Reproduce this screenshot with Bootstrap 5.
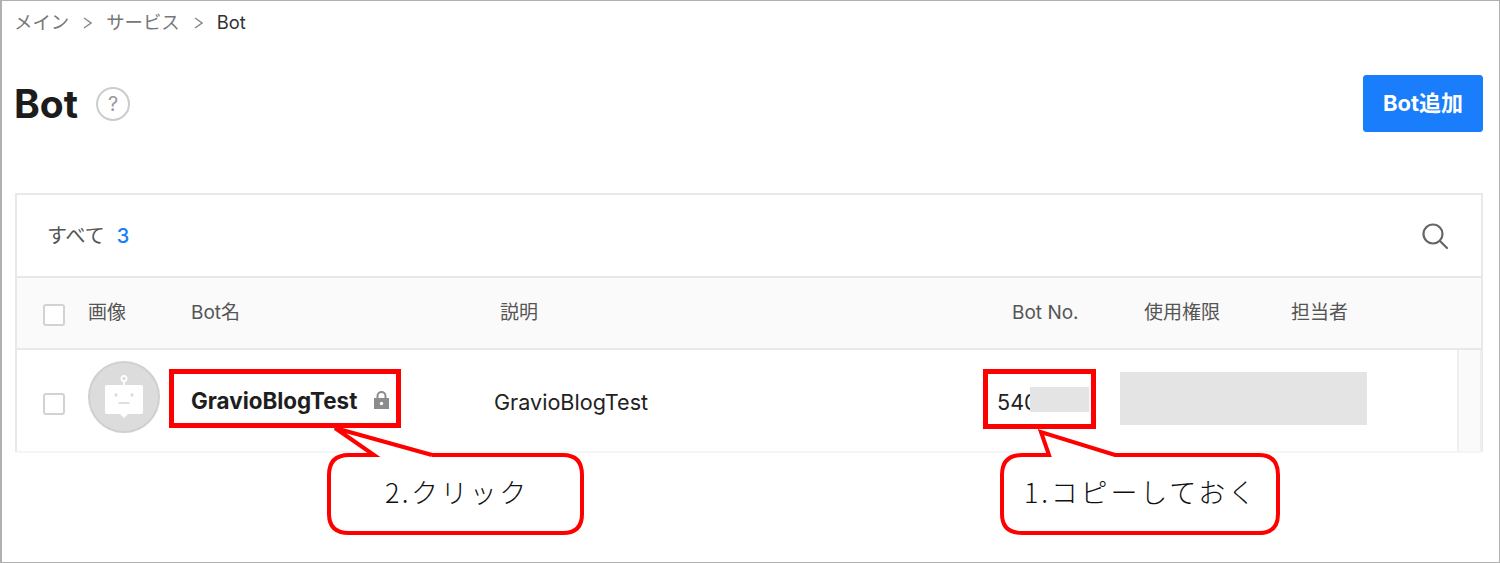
<!DOCTYPE html>
<html lang="ja">
<head>
    <meta charset="UTF-8">
    <title>Bot</title>
    <link href="https://cdn.jsdelivr.net/npm/bootstrap@5.3.2/dist/css/bootstrap.min.css" rel="stylesheet">
    <style>
        html, body { height: 563px; overflow: hidden; }
        body { font-family: Inter, "Noto Sans CJK JP", sans-serif; color: #222; }
        .shot { position: relative; height: 563px; border: 1px solid #b0b0b0; border-left-width: 2px; padding: 0 16px 0 12px; overflow: hidden; }
        .crumbs { --bs-breadcrumb-divider: url("data:image/svg+xml,%3Csvg xmlns='http://www.w3.org/2000/svg' width='9' height='24'%3E%3Cpath d='M1 8l7 5-7 5' fill='none' stroke='%23888' stroke-width='1.4'/%3E%3C/svg%3E"); --bs-breadcrumb-margin-bottom: 0; --bs-breadcrumb-item-padding-x: 14px; font-size: 18.4px; line-height: 24px; padding-top: 9px; color: #777; }
        .crumbs .breadcrumb-item.active { color: #333; }
        .top-bar { height: 87px; margin-top: 21px; }
        .page-title { font-size: 39px; font-weight: 700; line-height: 1; color: #1c1c1c; margin: 0; }
        .help-mark { width: 34px; height: 34px; margin-left: 18px; border: 2px solid #ccc; font-size: 20px; color: #999; line-height: 30px; }
        .add-btn { --bs-btn-bg: #1a7dfb; --bs-btn-border-color: #1a7dfb; --bs-btn-color: #fff; width: 120px; height: 57px; font-size: 22px; font-weight: 700; border-radius: 3px; padding: 0; }
        .bot-panel { margin: 46px 0 0 1px; border: 2px solid #e8e8e8; border-bottom: 0; height: 259px; }
        .panel-head { height: 83px; padding: 0 32px 0 30px; font-size: 20px; color: #555; border-bottom: 2px solid #e8e8e8; }
        .panel-head b { font-weight: 500; color: #1a7dfb; margin-left: 12px; }
        .bot-table { table-layout: fixed; width: 1464px; margin: 0; --bs-table-color: #222; }
        .bot-table th { height: 71px; background: #fafafa; border-bottom: 2px solid #e8e8e8; font-size: 19px; font-weight: 400; color: #555; padding: 0; vertical-align: middle; }
        .bot-table td { height: 103px; border-bottom: 2px solid #f5f5f5; padding: 0; vertical-align: middle; font-size: 21.6px; }
        .c-check { width: 71px; padding-left: 26px !important; }
        .c-image { width: 103px; }
        .c-name { width: 303px; }
        .c-desc { width: 503px; }
        .c-no, .c-perm { width: 147px; }
        .c-owner { width: 167px; }
        .c-scroll { width: 23px; }
        .th-desc { padding-left: 6px !important; }
        .th-no { padding-left: 15px !important; }
        td.c-desc, td.c-no { padding-top: 3px; }
        td.c-scroll { background: #fafafa; border-left: 2px solid #eee; border-right: 2px solid #eee; }
        .tick { width: 22px; height: 22px; border: 2px solid #d2d2d2; border-radius: 3px; background: #fff; display: block; }
        th .tick { margin-top: 4px; }
        td .tick { margin-top: 6px; }
        .avatar { width: 72px; height: 72px; background: #dcdcdc; border: 2px solid #d0d0d0; margin-bottom: 8px; }
        .bot-name { font-weight: 700; color: #1e1e1e; font-size: 22.4px; }
        .redact { position: absolute; background: #e4e4e4; }
        .redact-no { left: 1028px; top: 386px; width: 59px; height: 25px; }
        .redact-perm { left: 1118px; top: 371px; width: 247px; height: 53px; }
        .red-frame { position: absolute; border: 5px solid #f00; }
        .frame-name { left: 167px; top: 368px; width: 232px; height: 59px; }
        .frame-no { left: 981px; top: 368px; width: 113px; height: 60px; }
        .note-lines { position: absolute; left: -1px; top: 0; }
        .note-text { position: absolute; top: 472px; font-size: 27px; line-height: 38px; font-weight: 300; color: #111; white-space: nowrap; font-family: "Noto Sans CJK JP", sans-serif; }
        .text-two { left: 383px; letter-spacing: 2.4px; }
        .text-one { left: 1022px; letter-spacing: 2.8px; }
    </style>
</head>
<body>

<div class="shot">
    <nav aria-label="breadcrumb">
        <ol class="breadcrumb crumbs">
            <li class="breadcrumb-item">メイン</li>
            <li class="breadcrumb-item">サービス</li>
            <li class="breadcrumb-item active" aria-current="page">Bot</li>
        </ol>
    </nav>

    <div class="top-bar d-flex align-items-center justify-content-between">
        <div class="d-flex align-items-center">
            <h1 class="page-title">Bot</h1>
            <span class="help-mark rounded-circle text-center">?</span>
        </div>
        <button type="button" class="btn add-btn">Bot追加</button>
    </div>

    <div class="bot-panel">
        <div class="panel-head d-flex align-items-center justify-content-between">
            <div>すべて<b>3</b></div>
            <svg width="28" height="28" viewBox="0 0 28 28" fill="none" stroke="#666" stroke-width="2.2">
                <circle cx="12" cy="12" r="9.5"/>
                <path d="M19 19l7 7" stroke-linecap="round"/>
            </svg>
        </div>
        <table class="table bot-table">
            <thead>
                <tr>
                    <th class="c-check"><span class="tick"></span></th>
                    <th class="c-image">画像</th>
                    <th class="c-name">Bot名</th>
                    <th class="c-desc th-desc">説明</th>
                    <th class="c-no th-no">Bot No.</th>
                    <th class="c-perm">使用権限</th>
                    <th class="c-owner">担当者</th>
                    <th class="c-scroll"></th>
                </tr>
            </thead>
            <tbody>
                <tr>
                    <td class="c-check"><span class="tick"></span></td>
                    <td class="c-image">
                        <div class="avatar rounded-circle d-flex align-items-center justify-content-center">
                            <svg width="40" height="44" viewBox="0 0 40 44">
                                <circle cx="20" cy="3.5" r="2.6" fill="none" stroke="#fff" stroke-width="1.8"/>
                                <path d="M20 6v5" stroke="#fff" stroke-width="1.8"/>
                                <path d="M3 10h34a2 2 0 0 1 2 2v25a2 2 0 0 1-2 2H24l-4 4-4-4H3a2 2 0 0 1-2-2V12a2 2 0 0 1 2-2z" fill="#fff"/>
                                <circle cx="12" cy="20" r="1.7" fill="#dcdcdc"/>
                                <circle cx="28" cy="20" r="1.7" fill="#dcdcdc"/>
                                <path d="M14.5 28h11" stroke="#dcdcdc" stroke-width="1.8"/>
                            </svg>
                        </div>
                    </td>
                    <td class="c-name">
                        <div class="d-flex align-items-center">
                            <span class="bot-name">GravioBlogTest</span>
                            <svg class="ms-3" width="17" height="20" viewBox="0 0 17 20">
                                <path d="M4.5 9V6a4 4 0 0 1 8 0v3" fill="none" stroke="#8c8c8c" stroke-width="2"/>
                                <rect x="1" y="8" width="15" height="11" fill="#8c8c8c"/>
                                <circle cx="8.5" cy="13.5" r="1.7" fill="#fff"/>
                            </svg>
                        </div>
                    </td>
                    <td class="c-desc">GravioBlogTest</td>
                    <td class="c-no">540</td>
                    <td class="c-perm"></td>
                    <td class="c-owner"></td>
                    <td class="c-scroll"></td>
                </tr>
            </tbody>
        </table>
    </div>

    <div class="redact redact-no"></div>
    <div class="redact redact-perm"></div>
    <div class="red-frame frame-name"></div>
    <div class="red-frame frame-no"></div>

    <svg class="note-lines" width="1498" height="561" fill="#fff" stroke="#f00" stroke-width="4" stroke-linejoin="miter">
        <path d="M431 454 L334 427 L373 454 H348 Q328 454 328 474 V513 Q328 532 348 532 H562 Q581 532 581 513 V474 Q581 454 562 454 H431"/>
        <path d="M1021 454 H1048 L1040 431 L1114 454 H1258 Q1277 454 1277 474 V513 Q1277 532 1258 532 H1021 Q1001 532 1001 513 V474 Q1001 454 1021 454"/>
    </svg>
    <span class="note-text text-two">2.クリック</span>
    <span class="note-text text-one">1.コピーしておく</span>
</div>

</body>
</html>
